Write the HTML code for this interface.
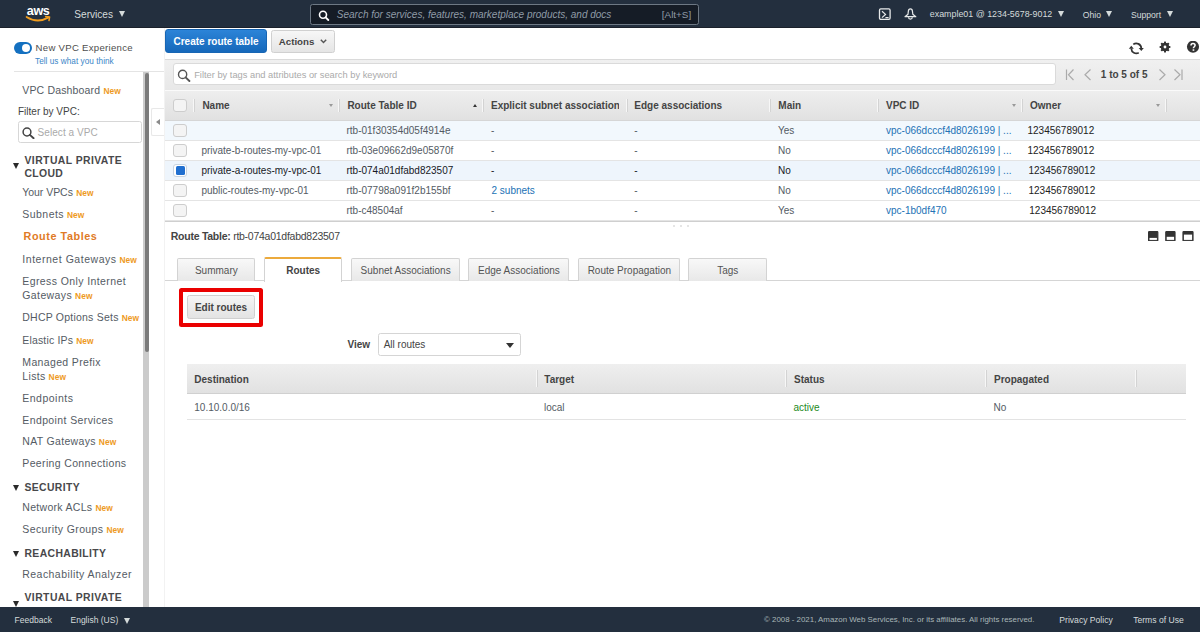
<!DOCTYPE html>
<html><head><meta charset="utf-8">
<style>
*{margin:0;padding:0;box-sizing:border-box}
html,body{width:1200px;height:632px;overflow:hidden;background:#fff;font-family:"Liberation Sans",sans-serif;font-size:10px;color:#444}
.a{position:absolute;white-space:nowrap;line-height:1}
.tri{position:absolute;width:0;height:0;border-left:3.3px solid transparent;border-right:3.3px solid transparent;border-top:6px solid #d5dbdb}
.new{color:#ee9a1e;font-weight:bold;font-size:8.4px;margin-left:3.5px;letter-spacing:0.1px}
.stri{position:absolute;left:13.1px;width:0;height:0;border-left:3.5px solid transparent;border-right:3.5px solid transparent;border-top:6px solid #2a2a2a;margin-top:0.4px}
.dv{position:absolute;width:1px;background:#d3d3d3;box-shadow:-1px 0 0 #f7f7f7}
.cb{position:absolute;left:173px;width:13.6px;height:13.2px;border:1px solid #cdcdcd;border-radius:3px;background:#f4f4f4}
.lnk{color:#2272b5}
.tab{position:absolute;top:257.5px;height:23px;background:linear-gradient(#f8f8f8,#e8e8e8);border:1px solid #d3d3d3;border-bottom:none;border-radius:2px 2px 0 0;color:#545454;font-size:10px;text-align:center;line-height:23px}
</style></head><body>
<div class="a" style="left:0;top:0;width:1200px;height:28px;background:#232f3e;border-bottom:1px solid #1b212b"></div>
<svg class="a" style="left:25px;top:4px" width="28" height="20" viewBox="0 0 28 20"><text x="1.8" y="10.9" font-family="Liberation Sans" font-weight="bold" font-size="12.6" fill="#fff" letter-spacing="-0.4">aws</text><path d="M1.6 12.9 Q12.5 19.8 23.6 13.4" stroke="#f29d1e" stroke-width="1.8" fill="none" stroke-linecap="round"/><path d="M20.6 12.6 L24.6 13 L24 16.6" stroke="#f29d1e" stroke-width="1.5" fill="none" stroke-linecap="round" stroke-linejoin="round"/></svg>
<div class="a" style="left:74.3px;top:9.7px;font-size:10.1px;color:#d5dbdb">Services</div>
<div class="tri" style="left:119px;top:10.8px;border-left-width:3.6px;border-right-width:3.6px;border-top-width:6.4px"></div>
<div class="a" style="left:310px;top:3.5px;width:389px;height:21.5px;background:#151c26;border:1px solid #6d7884;border-radius:2.5px"></div>
<svg class="a" style="left:318px;top:9.5px" width="12" height="11" viewBox="0 0 12 11"><circle cx="5" cy="4.7" r="3.5" stroke="#fff" stroke-width="1.6" fill="none"/><path d="M7.6 7.3 L10.3 10" stroke="#fff" stroke-width="1.8" stroke-linecap="round"/></svg>
<div class="a" style="left:336.8px;top:10.09px;font-size:10px;font-style:italic;color:#8f9ba6">Search for services, features, marketplace products, and docs</div>
<div class="a" style="left:661.8px;top:10.17px;font-size:9.9px;color:#8f9ba6">[Alt+S]</div>
<svg class="a" style="left:878px;top:8px" width="13" height="13" viewBox="0 0 13 13"><rect x="1.5" y="0.9" width="10.6" height="10.4" rx="1.3" stroke="#e8eaea" stroke-width="1.3" fill="none"/><path d="M4 3.2 L7.5 6.4 L4 9.6 M7.4 9.7 H10.6" stroke="#e8eaea" stroke-width="1.25" fill="none"/></svg>
<svg class="a" style="left:904px;top:8px" width="13" height="13" viewBox="0 0 13 13"><path d="M6.4 0.9 C5.1 0.9 4.4 2.1 4.3 3.6 L4 6.2 L1 8.7 H11.8 L8.8 6.2 L8.5 3.6 C8.4 2.1 7.7 0.9 6.4 0.9 Z" stroke="#e8eaea" stroke-width="1.2" fill="none" stroke-linejoin="round"/><path d="M4.5 9.2 A1.9 1.9 0 0 0 8.3 9.2" stroke="#e8eaea" stroke-width="1.2" fill="none"/></svg>
<div class="a" style="left:929.8px;top:10.42px;font-size:8.9px;color:#d5dbdb">example01 @ 1234-5678-9012</div>
<div class="tri" style="left:1058px;top:11.3px"></div>
<div class="a" style="left:1082.8px;top:10.67px;font-size:8.6px;color:#d5dbdb">Ohio</div>
<div class="tri" style="left:1106px;top:11.3px"></div>
<div class="a" style="left:1131px;top:10.67px;font-size:8.6px;color:#d5dbdb">Support</div>
<div class="tri" style="left:1167px;top:11.3px"></div>
<div class="a" style="left:14px;top:42.2px;width:17.6px;height:11.6px;border-radius:6px;background:#1470c0"></div>
<div class="a" style="left:21.5px;top:43.8px;width:8.6px;height:8.6px;border-radius:50%;background:#fff"></div>
<div class="a" style="left:35.6px;top:42.82px;font-size:9.6px;color:#4d4d4d;letter-spacing:0.282px">New VPC Experience</div>
<div class="a" style="left:35px;top:57.81px;font-size:8.2px;color:#3b86c8;letter-spacing:0.041px">Tell us what you think</div>
<div class="a" style="left:14px;top:70.8px;width:151px;height:1px;background:#e4e4e4"></div>
<div class="a" style="left:143px;top:72px;width:6.3px;height:535px;background:#cbcbcb"></div>
<div class="a" style="left:145px;top:73px;width:4.4px;height:278.5px;border-radius:2px;background:#7a7a7a"></div>
<div class="a" style="left:151.3px;top:108.4px;width:14px;height:27.2px;background:#fff;border:1px solid #e8e8e8;border-right:none;border-radius:2px 0 0 2px"></div>
<div class="a" style="left:156px;top:119px;width:0;height:0;border-top:3.9px solid transparent;border-bottom:3.9px solid transparent;border-right:4.4px solid #8a8a8a"></div>
<div class="a" style="left:22.3px;top:85.06px;font-size:10.5px;color:#545b64;letter-spacing:0.16px">VPC Dashboard<span class="new" style="margin-left:3.14px">New</span></div>
<div class="a" style="left:18px;top:107.19px;font-size:10px;color:#444">Filter by VPC:</div>
<div class="a" style="left:18.4px;top:121px;width:123.7px;height:21.5px;border:1px solid #d7d7d7;border-radius:2.5px;background:#fff"></div>
<svg class="a" style="left:21.5px;top:126.5px" width="13" height="12" viewBox="0 0 13 12"><circle cx="5" cy="5" r="3.9" stroke="#444" stroke-width="1.5" fill="none"/><path d="M7.9 7.9 L11.6 11.2" stroke="#444" stroke-width="1.9" stroke-linecap="round"/></svg>
<div class="a" style="left:37.5px;top:127.58px;font-size:10px;color:#aaa;letter-spacing:0.075px">Select a VPC</div>
<div class="stri" style="top:162.7px"></div>
<div class="a" style="left:24.5px;top:156.15px;font-size:10.4px;font-weight:bold;color:#48484a;letter-spacing:0.429px">VIRTUAL PRIVATE</div>
<div class="a" style="left:24.5px;top:168.75px;font-size:10.4px;font-weight:bold;color:#48484a;letter-spacing:0.331px">CLOUD</div>
<div class="a" style="left:22.3px;top:187.16px;font-size:10.5px;color:#545b64;letter-spacing:-0.047px">Your VPCs<span class="new" style="margin-left:3.35px">New</span></div>
<div class="a" style="left:22.3px;top:209.46px;font-size:10.5px;color:#545b64;letter-spacing:0.462px">Subnets<span class="new" style="margin-left:2.84px">New</span></div>
<div class="a" style="left:23.6px;top:231.11px;font-size:10.8px;font-weight:bold;color:#df7a26;letter-spacing:0.563px">Route Tables</div>
<div class="a" style="left:22.3px;top:253.56px;font-size:10.5px;color:#545b64;letter-spacing:0.537px">Internet Gateways<span class="new" style="margin-left:2.76px">New</span></div>
<div class="a" style="left:22.3px;top:275.76px;font-size:10.5px;color:#545b64;letter-spacing:0.399px">Egress Only Internet</div>
<div class="a" style="left:22.3px;top:289.66px;font-size:10.5px;color:#545b64;letter-spacing:0.388px">Gateways<span class="new" style="margin-left:2.91px">New</span></div>
<div class="a" style="left:22.3px;top:312.26px;font-size:10.5px;color:#545b64;letter-spacing:0.219px">DHCP Options Sets<span class="new" style="margin-left:3.08px">New</span></div>
<div class="a" style="left:22.3px;top:334.56px;font-size:10.5px;color:#545b64;letter-spacing:0.159px">Elastic IPs<span class="new" style="margin-left:3.14px">New</span></div>
<div class="a" style="left:22.3px;top:356.96px;font-size:10.5px;color:#545b64;letter-spacing:0.351px">Managed Prefix</div>
<div class="a" style="left:22.3px;top:370.96px;font-size:10.5px;color:#545b64;letter-spacing:0.328px">Lists<span class="new" style="margin-left:2.97px">New</span></div>
<div class="a" style="left:22.3px;top:393.26px;font-size:10.5px;color:#545b64;letter-spacing:0.487px">Endpoints</div>
<div class="a" style="left:22.3px;top:414.86px;font-size:10.5px;color:#545b64;letter-spacing:0.385px">Endpoint Services</div>
<div class="a" style="left:22.3px;top:436.36px;font-size:10.5px;color:#545b64;letter-spacing:0.324px">NAT Gateways<span class="new" style="margin-left:2.98px">New</span></div>
<div class="a" style="left:22.3px;top:458.46px;font-size:10.5px;color:#545b64;letter-spacing:0.351px">Peering Connections</div>
<div class="stri" style="top:484.6px"></div>
<div class="a" style="left:24.5px;top:483.15px;font-size:10.4px;font-weight:bold;color:#48484a;letter-spacing:0.373px">SECURITY</div>
<div class="a" style="left:22.3px;top:501.76px;font-size:10.5px;color:#545b64;letter-spacing:0.298px">Network ACLs<span class="new" style="margin-left:3.0px">New</span></div>
<div class="a" style="left:22.3px;top:524.06px;font-size:10.5px;color:#545b64;letter-spacing:0.394px">Security Groups<span class="new" style="margin-left:2.91px">New</span></div>
<div class="stri" style="top:550.6px"></div>
<div class="a" style="left:24.5px;top:549.05px;font-size:10.4px;font-weight:bold;color:#48484a;letter-spacing:0.371px">REACHABILITY</div>
<div class="a" style="left:22.3px;top:568.76px;font-size:10.5px;color:#545b64;letter-spacing:0.441px">Reachability Analyzer</div>
<div class="stri" style="top:600.3px"></div>
<div class="a" style="left:24.5px;top:592.95px;font-size:10.4px;font-weight:bold;color:#48484a;letter-spacing:0.429px">VIRTUAL PRIVATE</div>
<div class="a" style="left:24.5px;top:607.15px;font-size:10.4px;font-weight:bold;color:#48484a;letter-spacing:0.331px">CLOUD</div>
<div class="a" style="left:164px;top:28px;width:1px;height:579px;background:#f2f2f2"></div>
<div class="a" style="left:165px;top:29px;width:101.5px;height:24px;background:linear-gradient(#2c84d8,#1668ba);border:1px solid #1866b4;border-radius:3px"></div>
<div class="a" style="left:173.5px;top:37.19px;font-size:10px;font-weight:bold;color:#fff">Create route table</div>
<div class="a" style="left:270.5px;top:30px;width:64px;height:22.5px;background:linear-gradient(#f7f7f7,#e5e5e5);border:1px solid #d0d0d0;border-radius:2.5px"></div>
<div class="a" style="left:278.8px;top:37.44px;font-size:9.7px;font-weight:bold;color:#444">Actions</div>
<svg class="a" style="left:319.5px;top:39px" width="7" height="5" viewBox="0 0 7 5"><path d="M0.8 0.8 L3.5 3.6 L6.2 0.8" stroke="#555" stroke-width="1.4" fill="none"/></svg>
<svg class="a" style="left:1128px;top:40.6px" width="17" height="14" viewBox="0 0 17 14"><path d="M5.3 3.4 A5 5 0 0 1 13.3 7.1" stroke="#333" stroke-width="1.7" fill="none"/><path d="M10.75 11.75 A5 5 0 0 1 3.3 7.6" stroke="#333" stroke-width="1.7" fill="none"/><path d="M10.7 7.1 L15.8 7.1 L13.3 10.1 Z" fill="#333"/><path d="M0.8 7.8 L5.8 7.8 L3.3 4.7 Z" fill="#333"/></svg>
<svg class="a" style="left:1159px;top:41px" width="12" height="12" viewBox="0 0 12 12"><g fill="#333"><circle cx="6" cy="6" r="4.25"/><rect x="5" y="0.6" width="2" height="2.8" rx="0.5" transform="rotate(0 6 6)"/><rect x="5" y="0.6" width="2" height="2.8" rx="0.5" transform="rotate(45 6 6)"/><rect x="5" y="0.6" width="2" height="2.8" rx="0.5" transform="rotate(90 6 6)"/><rect x="5" y="0.6" width="2" height="2.8" rx="0.5" transform="rotate(135 6 6)"/><rect x="5" y="0.6" width="2" height="2.8" rx="0.5" transform="rotate(180 6 6)"/><rect x="5" y="0.6" width="2" height="2.8" rx="0.5" transform="rotate(225 6 6)"/><rect x="5" y="0.6" width="2" height="2.8" rx="0.5" transform="rotate(270 6 6)"/><rect x="5" y="0.6" width="2" height="2.8" rx="0.5" transform="rotate(315 6 6)"/></g><circle cx="6" cy="6" r="1.4" fill="#fff"/></svg>
<svg class="a" style="left:1186px;top:41px" width="14" height="12.5" viewBox="0 0 14 12.5"><circle cx="7" cy="5.75" r="6.05" fill="#333"/><path d="M5 4.4 C5 3 5.9 2.5 7 2.5 C8.2 2.5 9.1 3.2 9.1 4.3 C9.1 5.6 7.4 5.8 7.4 7.2" stroke="#fff" stroke-width="1.5" fill="none"/><rect x="6.6" y="8.3" width="1.7" height="1.5" fill="#fff"/></svg>
<div class="a" style="left:165px;top:59px;width:1035px;height:31px;background:linear-gradient(#f0f0f0,#e8e8e8);border-top:1px solid #dadada"></div>
<div class="a" style="left:172.5px;top:63.4px;width:883px;height:21.5px;background:#fff;border:1px solid #dadada;border-radius:3px"></div>
<svg class="a" style="left:176.5px;top:68.5px" width="14" height="13" viewBox="0 0 14 13"><circle cx="5.6" cy="5.4" r="4.1" stroke="#555" stroke-width="1.4" fill="none"/><path d="M8.6 8.4 L12.4 12" stroke="#555" stroke-width="1.9" stroke-linecap="round"/></svg>
<div class="a" style="left:194.2px;top:71.08px;font-size:9.3px;color:#aaa">Filter by tags and attributes or search by keyword</div>
<svg class="a" style="left:1064px;top:67.5px" width="120" height="14" viewBox="0 0 120 14"><path d="M2.5 1.5 V12" stroke="#aaa" stroke-width="1.2"/><path d="M9.5 1.5 L4.5 6.8 L9.5 12" stroke="#aaa" stroke-width="1.2" fill="none"/><path d="M26.5 1.5 L21 6.8 L26.5 12" stroke="#aaa" stroke-width="1.2" fill="none"/><path d="M95.5 1.5 L101 6.8 L95.5 12" stroke="#aaa" stroke-width="1.2" fill="none"/><path d="M110.5 1.5 L116 6.8 L110.5 12" stroke="#aaa" stroke-width="1.2" fill="none"/><path d="M118 1.5 V12" stroke="#aaa" stroke-width="1.2"/></svg>
<div class="a" style="left:1100.8px;top:69.98px;font-size:10px;font-weight:bold;color:#444">1 to 5 of 5</div>
<div class="a" style="left:165px;top:89.5px;width:1035px;height:31px;background:linear-gradient(#eeeeee,#e1e1e1);border-top:1px solid #fafafa;border-bottom:1px solid #d6d6d6"></div>
<div class="cb" style="top:98.5px"></div>
<div class="dv" style="left:194px;top:98.8px;height:13px"></div>
<div class="dv" style="left:338.5px;top:98.8px;height:13px"></div>
<div class="dv" style="left:482.5px;top:98.8px;height:13px"></div>
<div class="dv" style="left:626.5px;top:98.8px;height:13px"></div>
<div class="dv" style="left:770px;top:98.8px;height:13px"></div>
<div class="dv" style="left:878px;top:98.8px;height:13px"></div>
<div class="dv" style="left:1022px;top:98.8px;height:13px"></div>
<div class="dv" style="left:1166px;top:98.8px;height:13px"></div>
<div class="a" style="left:202.4px;top:100.98px;font-size:10px;font-weight:bold;color:#444;">Name</div>
<div class="a" style="left:347.4px;top:100.98px;font-size:10px;font-weight:bold;color:#444;">Route Table ID</div>
<div class="a" style="left:491px;top:99.98px;font-size:10px;font-weight:bold;color:#444;width:127.6px;overflow:hidden;line-height:1.2;">Explicit subnet association</div>
<div class="a" style="left:634.3px;top:100.98px;font-size:10px;font-weight:bold;color:#444;">Edge associations</div>
<div class="a" style="left:778.3px;top:100.98px;font-size:10px;font-weight:bold;color:#444;">Main</div>
<div class="a" style="left:886px;top:100.98px;font-size:10px;font-weight:bold;color:#444;">VPC ID</div>
<div class="a" style="left:1030px;top:100.98px;font-size:10px;font-weight:bold;color:#444;">Owner</div>
<div class="a" style="left:328.8px;top:104px;width:0;height:0;border-left:2.7px solid transparent;border-right:2.7px solid transparent;border-top:3px solid #999"></div>
<div class="a" style="left:1011.8px;top:104px;width:0;height:0;border-left:2.7px solid transparent;border-right:2.7px solid transparent;border-top:3px solid #999"></div>
<div class="a" style="left:1155.5px;top:104px;width:0;height:0;border-left:2.7px solid transparent;border-right:2.7px solid transparent;border-top:3px solid #999"></div>
<div class="a" style="left:473px;top:103.5px;width:0;height:0;border-left:2.5px solid transparent;border-right:2.5px solid transparent;border-bottom:3px solid #333"></div>
<div class="a" style="left:165px;top:120.5px;width:1035px;height:20px;background:#f2f8fd;border-bottom:1px solid #e4e4e4"></div>
<div class="cb" style="top:123.5px"></div>
<div class="a" style="left:201.4px;top:126.48px;font-size:10px;color:#545b64"></div>
<div class="a" style="left:346.5px;top:126.48px;font-size:10px;color:#545b64">rtb-01f30354d05f4914e</div>
<div class="a" style="left:491px;top:126.48px;font-size:10px;color:#545b64">-</div>
<div class="a" style="left:634.3px;top:126.48px;font-size:10px;color:#545b64">-</div>
<div class="a" style="left:778px;top:126.48px;font-size:10px;color:#545b64">Yes</div>
<div class="a" style="left:886px;top:126.48px;font-size:10px;color:#2272b5">vpc-066dcccf4d8026199 | ...</div>
<div class="a" style="left:1027.5px;top:126.48px;font-size:10px;color:#222">123456789012</div>
<div class="a" style="left:165px;top:140.5px;width:1035px;height:20px;background:#fff;border-bottom:1px solid #e4e4e4"></div>
<div class="cb" style="top:143.5px"></div>
<div class="a" style="left:201.4px;top:146.48px;font-size:10px;color:#545b64">private-b-routes-my-vpc-01</div>
<div class="a" style="left:346.5px;top:146.48px;font-size:10px;color:#545b64">rtb-03e09662d9e05870f</div>
<div class="a" style="left:491px;top:146.48px;font-size:10px;color:#545b64">-</div>
<div class="a" style="left:634.3px;top:146.48px;font-size:10px;color:#545b64">-</div>
<div class="a" style="left:778px;top:146.48px;font-size:10px;color:#545b64">No</div>
<div class="a" style="left:886px;top:146.48px;font-size:10px;color:#2272b5">vpc-066dcccf4d8026199 | ...</div>
<div class="a" style="left:1027.5px;top:146.48px;font-size:10px;color:#222">123456789012</div>
<div class="a" style="left:165px;top:160.5px;width:1035px;height:20px;background:#eef5fc;border-bottom:1px solid #e4e4e4"></div>
<div class="cb" style="top:163.5px;background:#fff;border-color:#c8d4e0"></div>
<div class="a" style="left:175.5px;top:166.0px;width:9px;height:9px;border-radius:1.5px;background:#1f6fd0"></div>
<div class="a" style="left:201.4px;top:166.48px;font-size:10px;color:#16191f">private-a-routes-my-vpc-01</div>
<div class="a" style="left:346.5px;top:166.48px;font-size:10px;color:#16191f">rtb-074a01dfabd823507</div>
<div class="a" style="left:491px;top:166.48px;font-size:10px;color:#16191f">-</div>
<div class="a" style="left:634.3px;top:166.48px;font-size:10px;color:#16191f">-</div>
<div class="a" style="left:778px;top:166.48px;font-size:10px;color:#16191f">No</div>
<div class="a" style="left:886px;top:166.48px;font-size:10px;color:#2272b5">vpc-066dcccf4d8026199 | ...</div>
<div class="a" style="left:1028.5px;top:166.48px;font-size:10px;color:#222">123456789012</div>
<div class="a" style="left:165px;top:180.5px;width:1035px;height:20px;background:#fff;border-bottom:1px solid #e4e4e4"></div>
<div class="cb" style="top:183.5px"></div>
<div class="a" style="left:201.4px;top:186.48px;font-size:10px;color:#545b64">public-routes-my-vpc-01</div>
<div class="a" style="left:346.5px;top:186.48px;font-size:10px;color:#545b64">rtb-07798a091f2b155bf</div>
<div class="a" style="left:491.5px;top:186.48px;font-size:10px;color:#2272b5">2 subnets</div>
<div class="a" style="left:634.3px;top:186.48px;font-size:10px;color:#545b64">-</div>
<div class="a" style="left:778px;top:186.48px;font-size:10px;color:#545b64">No</div>
<div class="a" style="left:886px;top:186.48px;font-size:10px;color:#2272b5">vpc-066dcccf4d8026199 | ...</div>
<div class="a" style="left:1028.5px;top:186.48px;font-size:10px;color:#222">123456789012</div>
<div class="a" style="left:165px;top:200.5px;width:1035px;height:20px;background:#fff;border-bottom:1px solid #e4e4e4"></div>
<div class="cb" style="top:203.5px"></div>
<div class="a" style="left:201.4px;top:206.48px;font-size:10px;color:#545b64"></div>
<div class="a" style="left:346.5px;top:206.48px;font-size:10px;color:#545b64">rtb-c48504af</div>
<div class="a" style="left:491px;top:206.48px;font-size:10px;color:#545b64">-</div>
<div class="a" style="left:634.3px;top:206.48px;font-size:10px;color:#545b64">-</div>
<div class="a" style="left:778px;top:206.48px;font-size:10px;color:#545b64">Yes</div>
<div class="a" style="left:886px;top:206.48px;font-size:10px;color:#2272b5">vpc-1b0df470</div>
<div class="a" style="left:1029.3px;top:206.48px;font-size:10px;color:#222">123456789012</div>
<div class="a" style="left:165px;top:220.5px;width:1035px;height:1.5px;background:#cfcfcf"></div>
<div class="a" style="left:673px;top:225px;width:2px;height:2px;border-radius:50%;background:#ddd"></div>
<div class="a" style="left:680px;top:225px;width:2px;height:2px;border-radius:50%;background:#ddd"></div>
<div class="a" style="left:687px;top:225px;width:2px;height:2px;border-radius:50%;background:#ddd"></div>
<div class="a" style="left:170.8px;top:230.86px;font-size:10.5px;color:#444;letter-spacing:-0.26px"><b>Route Table:</b> rtb-074a01dfabd823507</div>
<svg class="a" style="left:1147.5px;top:230.8px" width="46" height="10.5" viewBox="0 0 46 10.5"><rect x="0.6" y="0.6" width="9.2" height="9.2" rx="0.6" fill="#333" stroke="#333" stroke-width="1.2"/><rect x="1.5" y="6.9" width="7.4" height="2" fill="#fff"/><rect x="17.8" y="0.6" width="9.2" height="9.2" rx="0.6" fill="#333" stroke="#333" stroke-width="1.2"/><rect x="18.7" y="5.8" width="7.4" height="3.1" fill="#fff"/><rect x="35" y="0.6" width="10" height="9.2" rx="0.6" fill="#333" stroke="#333" stroke-width="1.2"/><rect x="35.9" y="3.6" width="8.2" height="5.3" fill="#fff"/></svg>
<div class="a" style="left:165px;top:280px;width:1035px;height:1px;background:#d5d5d5"></div>
<div class="tab" style="left:177.2px;width:78.30000000000001px">Summary</div>
<div class="tab" style="left:264.2px;width:78.0px;top:256.5px;height:25px;background:#fff;border-top:2px solid #ecaa3c;font-weight:bold;line-height:24px;color:#444">Routes</div>
<div class="tab" style="left:351px;width:109.30000000000001px">Subnet Associations</div>
<div class="tab" style="left:468.3px;width:101.19999999999999px">Edge Associations</div>
<div class="tab" style="left:578.4px;width:101.89999999999998px">Route Propagation</div>
<div class="tab" style="left:688.4px;width:78.80000000000007px">Tags</div>
<div class="a" style="left:179.2px;top:288px;width:83.5px;height:38.5px;border:4px solid #ea0000;border-radius:2.5px"></div>
<div class="a" style="left:187px;top:295px;width:67.5px;height:23.5px;background:linear-gradient(#f5f5f5,#e3e3e3);border:1px solid #d0d0d0;border-radius:2.5px"></div>
<div class="a" style="left:194.9px;top:302.69px;font-size:10px;font-weight:bold;color:#444">Edit routes</div>
<div class="a" style="left:347.5px;top:340.29px;font-size:10px;font-weight:bold;color:#444">View</div>
<div class="a" style="left:377.5px;top:333px;width:143px;height:23px;border:1px solid #d5d5d5;border-radius:2.5px;background:#fff"></div>
<div class="a" style="left:383.7px;top:340.29px;font-size:10px;color:#444">All routes</div>
<div class="a" style="left:506.2px;top:343px;width:0;height:0;border-left:4px solid transparent;border-right:4px solid transparent;border-top:5px solid #333"></div>
<div class="a" style="left:186.7px;top:364px;width:999px;height:29.5px;background:linear-gradient(#efefef,#e1e1e1);border-bottom:1px solid #d0d0d0"></div>
<div class="dv" style="left:536.5px;top:370px;height:17px"></div>
<div class="dv" style="left:786px;top:370px;height:17px"></div>
<div class="dv" style="left:986px;top:370px;height:17px"></div>
<div class="dv" style="left:1135.5px;top:370px;height:17px"></div>
<div class="a" style="left:194.3px;top:374.69px;font-size:10px;font-weight:bold;color:#444">Destination</div>
<div class="a" style="left:544.3px;top:374.69px;font-size:10px;font-weight:bold;color:#444">Target</div>
<div class="a" style="left:794px;top:374.69px;font-size:10px;font-weight:bold;color:#444">Status</div>
<div class="a" style="left:994px;top:374.69px;font-size:10px;font-weight:bold;color:#444">Propagated</div>
<div class="a" style="left:194.3px;top:402.69px;font-size:10px;color:#545b64">10.10.0.0/16</div>
<div class="a" style="left:544px;top:402.69px;font-size:10px;color:#545b64">local</div>
<div class="a" style="left:793.5px;top:402.69px;font-size:10px;color:#1d8a1d">active</div>
<div class="a" style="left:993.5px;top:402.69px;font-size:10px;color:#545b64">No</div>
<div class="a" style="left:186.7px;top:419px;width:999px;height:1px;background:#e3e3e3"></div>
<div class="a" style="left:0;top:607px;width:1200px;height:25px;background:#232f3e"></div>
<div class="a" style="left:14.6px;top:616.25px;font-size:8.5px;color:#d5dbdb">Feedback</div>
<div class="a" style="left:70.5px;top:616.25px;font-size:8.5px;color:#d5dbdb">English (US)</div>
<div class="tri" style="left:124.4px;top:617.5px"></div>
<div class="a" style="left:764px;top:616.26px;font-size:7.9px;color:#aab7b8">© 2008 - 2021, Amazon Web Services, Inc. or its affiliates. All rights reserved.</div>
<div class="a" style="left:1059.3px;top:616.17px;font-size:8.6px;color:#d5dbdb">Privacy Policy</div>
<div class="a" style="left:1133.2px;top:616.17px;font-size:8.6px;color:#d5dbdb">Terms of Use</div>
</body></html>
